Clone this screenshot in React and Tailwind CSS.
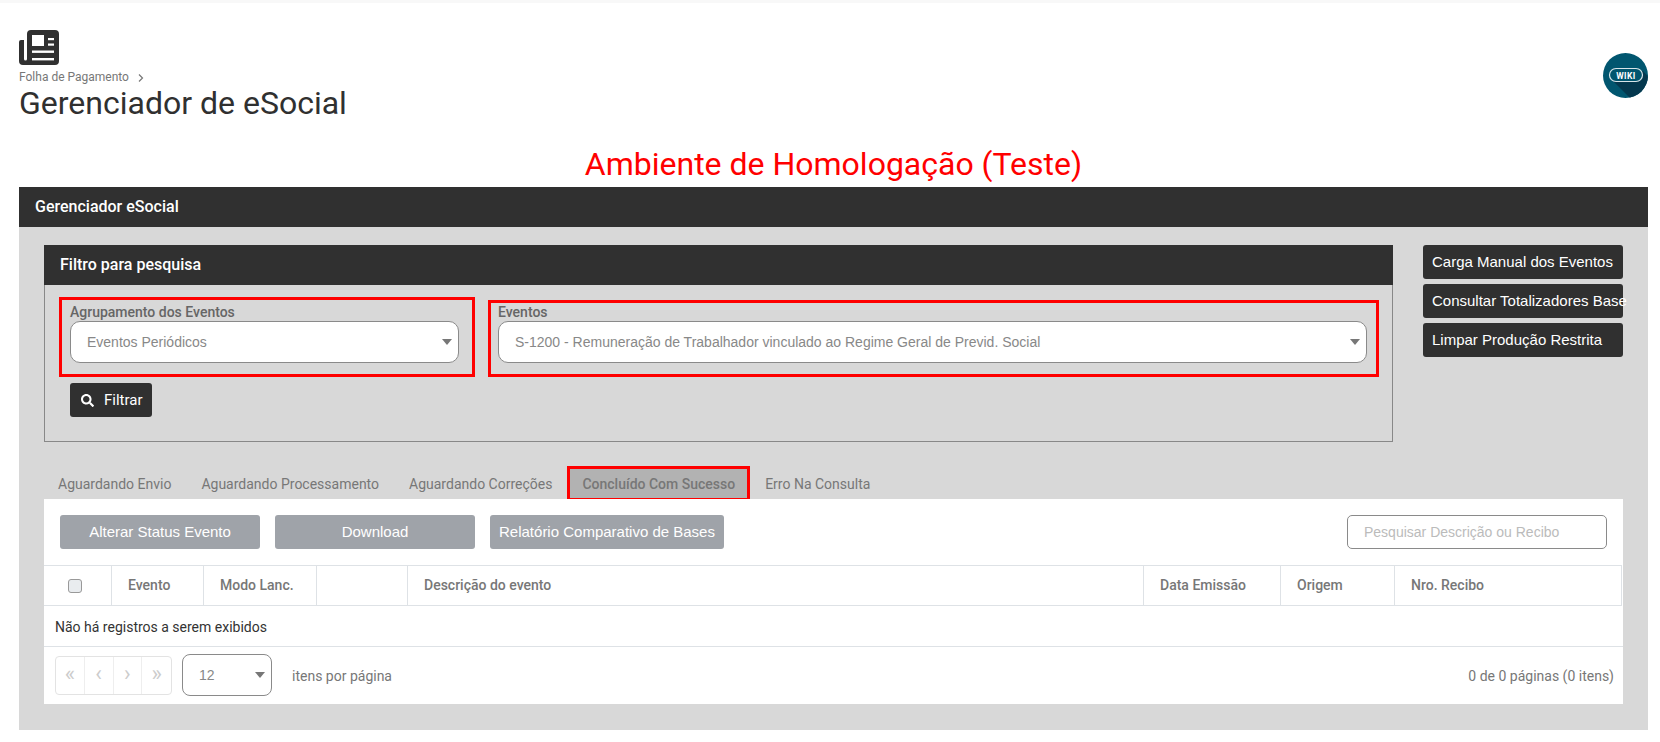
import { FaSearch } from "react-icons/fa";

const arial = "font-['Liberation_Sans',Arial,sans-serif]";

const Caret = () => (
  <span className="absolute right-[6px] top-1/2 -mt-[3px] h-0 w-0 border-x-[5.5px] border-t-[6px] border-x-transparent border-t-[#777]" />
);

const PageIcon = () => (
  <svg width="40" height="35" viewBox="0 0 40 35" className="block">
    <path
      fill="#303030"
      d="M8 4a4 4 0 0 1 4-4H36a4 4 0 0 1 4 4V31a4 4 0 0 1-4 4H4a4 4 0 0 1-4-4V12a2 2 0 0 1 2-2H5V29a1.5 1.5 0 0 0 3 0Z"
    />
    <rect x="13" y="5" width="12" height="11" fill="#fff" />
    <rect x="29" y="8" width="6" height="2.2" fill="#fff" />
    <rect x="29" y="13.5" width="6" height="2.2" fill="#fff" />
    <rect x="13" y="20.5" width="22" height="2.4" fill="#fff" />
    <rect x="13" y="28" width="22" height="2.4" fill="#fff" />
  </svg>
);

const WikiLogo = () => (
  <svg width="45" height="45" viewBox="0 0 45 45" className="shrink-0">
    <defs>
      <clipPath id="wiki-clip">
        <circle cx="22.5" cy="22.5" r="22.5" />
      </clipPath>
    </defs>
    <circle cx="22.5" cy="22.5" r="22.5" fill="#01566f" />
    <path d="M9 27 L40 18 L60 40 L30 48 Z" fill="#04384e" clipPath="url(#wiki-clip)" />
    <rect x="6.5" y="15.5" width="33" height="13" rx="6.5" fill="#01566f" stroke="#d7e4e8" strokeWidth="1.2" />
    <text
      x="23"
      y="25.5"
      textAnchor="middle"
      fontSize="8.5"
      fontWeight="700"
      letterSpacing="0.4"
      fill="#fff"
      fontFamily="Roboto, sans-serif"
    >
      WIKI
    </text>
  </svg>
);

const SideButton = ({ children }) => (
  <button className={`h-[34px] w-[200px] rounded-[3px] bg-[#303030] pl-[9px] text-left text-[15px] whitespace-nowrap text-white ${arial}`}>
    {children}
  </button>
);

const GrayButton = ({ children, className }) => (
  <button className={`h-[34px] rounded-[3px] bg-[#9fa3a9] text-center text-[15px] whitespace-nowrap text-white ${arial} ${className}`}>
    {children}
  </button>
);

const Field = ({ label, value, className, mark }) => (
  <div className={`relative ${className}`}>
    <div className="h-[18px] text-[14px] leading-[18px] font-medium text-[#666]">{label}</div>
    <div className={`relative flex h-[42px] items-center rounded-[10px] border border-[#8a8a8a] bg-white pl-[16px] text-[14px] text-[#888] ${arial}`}>
      {value}
      <Caret />
    </div>
    <div className={`pointer-events-none absolute border-[3px] border-[#ff0000] ${mark}`} />
  </div>
);

const Tab = ({ children, active }) => (
  <div
    className={`relative flex h-[32px] items-center px-[14px] pt-[3px] text-[14px] text-[#777] ${
      active ? "bg-[#b2b2b2] font-medium" : ""
    }`}
  >
    {children}
    {active && <div className="pointer-events-none absolute -top-[1px] -right-[1px] -bottom-[2px] -left-[1px] border-[3px] border-[#ff0000]" />}
  </div>
);

const Th = ({ children, className }) => (
  <div className={`flex items-center border-r border-[#dee2e6] pl-[16px] text-[14px] font-medium text-[#777] ${className}`}>
    {children}
  </div>
);

const PageBtn = ({ children }) => (
  <div className="flex h-full w-[29px] items-center justify-center border-r border-[#eee] pb-[3px] text-[22px] text-[#ccc] last:border-r-0">
    {children}
  </div>
);

export default function App() {
  return (
    <div className="h-[742px] w-[1660px] overflow-hidden bg-white font-[Roboto,sans-serif]">
      <div className="h-[3px] bg-[#f8f8f8]" />
      <div className="flex items-start justify-between pt-[27px] pr-[12px] pl-[19px]">
        <div>
          <PageIcon />
          <div className="mt-[5px] flex h-[15px] items-center text-[12px] leading-[15px] text-[#777]">
            Folha de Pagamento
            <svg width="8" height="10" viewBox="0 0 8 10" className="ml-[8px]">
              <path d="M2 1.5 L5.5 5 L2 8.5" fill="none" stroke="#777" strokeWidth="1.2" />
            </svg>
          </div>
          <h1 className="-mt-[1px] h-[38px] text-[32px] leading-[38px] font-normal text-[#303030]">Gerenciador de eSocial</h1>
        </div>
        <div className="pt-[23px]">
          <WikiLogo />
        </div>
      </div>

      <div className="mx-[19px] mt-[22px] h-[40px] w-[1629px] text-center text-[32px] leading-[40px] text-[#ff0000]">
        Ambiente de Homologação (Teste)
      </div>

      <div className="mx-[19px] mt-[3px] w-[1629px]">
        <div className="flex h-[40px] items-center bg-[#303030] pl-[16px] text-[16px] font-medium text-white">
          Gerenciador eSocial
        </div>

        <div className="h-[503px] bg-[#d8d8d8] px-[25px] pt-[18px]">
          <div className="flex">
            <div className="h-[197px] w-[1349px] border border-[#888]">
              <div className="-mx-px -mt-px flex h-[40px] items-center bg-[#303030] pl-[16px] text-[16px] font-medium text-white">
                Filtro para pesquisa
              </div>
              <div className="flex gap-[39px] pt-[18px] pl-[25px]">
                <Field
                  label="Agrupamento dos Eventos"
                  value="Eventos Periódicos"
                  className="w-[389px]"
                  mark="-top-[6px] -right-[16px] -bottom-[14px] -left-[11px]"
                />
                <Field
                  label="Eventos"
                  value="S-1200 - Remuneração de Trabalhador vinculado ao Regime Geral de Previd. Social"
                  className="w-[869px]"
                  mark="-top-[3px] -right-[12px] -bottom-[14px] -left-[10px]"
                />
              </div>
              <button className="mt-[20px] ml-[25px] flex h-[34px] w-[82px] items-center rounded-[3px] bg-[#303030] pl-[11px] text-[15px] text-white">
                <FaSearch className="mr-[10px] h-[13px] w-[13px]" />
                Filtrar
              </button>
            </div>
            <div className="ml-[30px] flex flex-col gap-[5px]">
              <SideButton>Carga Manual dos Eventos</SideButton>
              <SideButton>Consultar Totalizadores Base</SideButton>
              <SideButton>Limpar Produção Restrita</SideButton>
            </div>
          </div>

          <div className="mt-[25px] flex gap-[2px]">
            <Tab>Aguardando Envio</Tab>
            <Tab>Aguardando Processamento</Tab>
            <Tab>Aguardando Correções</Tab>
            <Tab active>Concluído Com Sucesso</Tab>
            <Tab>Erro Na Consulta</Tab>
          </div>

          <div className="relative h-[205px] w-[1579px] bg-white">
            <div className="flex items-center pt-[16px] pr-[16px] pl-[16px]">
              <GrayButton className="w-[200px]">Alterar Status Evento</GrayButton>
              <GrayButton className="ml-[15px] w-[200px]">Download</GrayButton>
              <GrayButton className="ml-[15px] w-[234px]">Relatório Comparativo de Bases</GrayButton>
              <div className={`ml-auto flex h-[34px] w-[260px] items-center rounded-[5px] border border-[#8a8a8a] pl-[16px] text-[14px] text-[#bbb] ${arial}`}>
                Pesquisar Descrição ou Recibo
              </div>
            </div>

            <div className="mt-[16px] flex h-[41px] w-[1578px] border-y border-[#dee2e6]">
              <div className="flex w-[68px] items-center justify-center border-r border-[#dee2e6] pr-[6px]">
                <span className="h-[14px] w-[14px] rounded-[3px] border border-[#999] bg-[#e9ecef]" />
              </div>
              <Th className="w-[92px]">Evento</Th>
              <Th className="w-[113px]">Modo Lanc.</Th>
              <Th className="w-[91px]" />
              <Th className="w-[736px]">Descrição do evento</Th>
              <Th className="w-[137px]">Data Emissão</Th>
              <Th className="w-[114px]">Origem</Th>
              <Th className="w-[227px]">Nro. Recibo</Th>
            </div>

            <div className="flex h-[41px] items-center border-b border-[#dee2e6] pt-[2px] pl-[11px] text-[14px] text-[#333]">
              Não há registros a serem exibidos
            </div>

            <div className="flex items-center pt-[7px] pr-[8px] pl-[11px]">
              <div className="flex h-[39px] w-[117px] items-center rounded-[4px] border border-[#e3e3e3]">
                <PageBtn>«</PageBtn>
                <PageBtn>‹</PageBtn>
                <PageBtn>›</PageBtn>
                <PageBtn>»</PageBtn>
              </div>
              <div className={`relative ml-[10px] flex h-[42px] w-[90px] items-center rounded-[8px] border border-[#8a8a8a] pl-[16px] text-[14px] text-[#888] ${arial}`}>
                12
                <Caret />
              </div>
              <span className="ml-[20px] pt-[3px] text-[14px] text-[#777]">itens por página</span>
              <span className="ml-auto pt-[3px] pr-[1px] text-[14px] text-[#777]">0 de 0 páginas (0 itens)</span>
            </div>
          </div>
        </div>
      </div>
    </div>
  );
}
